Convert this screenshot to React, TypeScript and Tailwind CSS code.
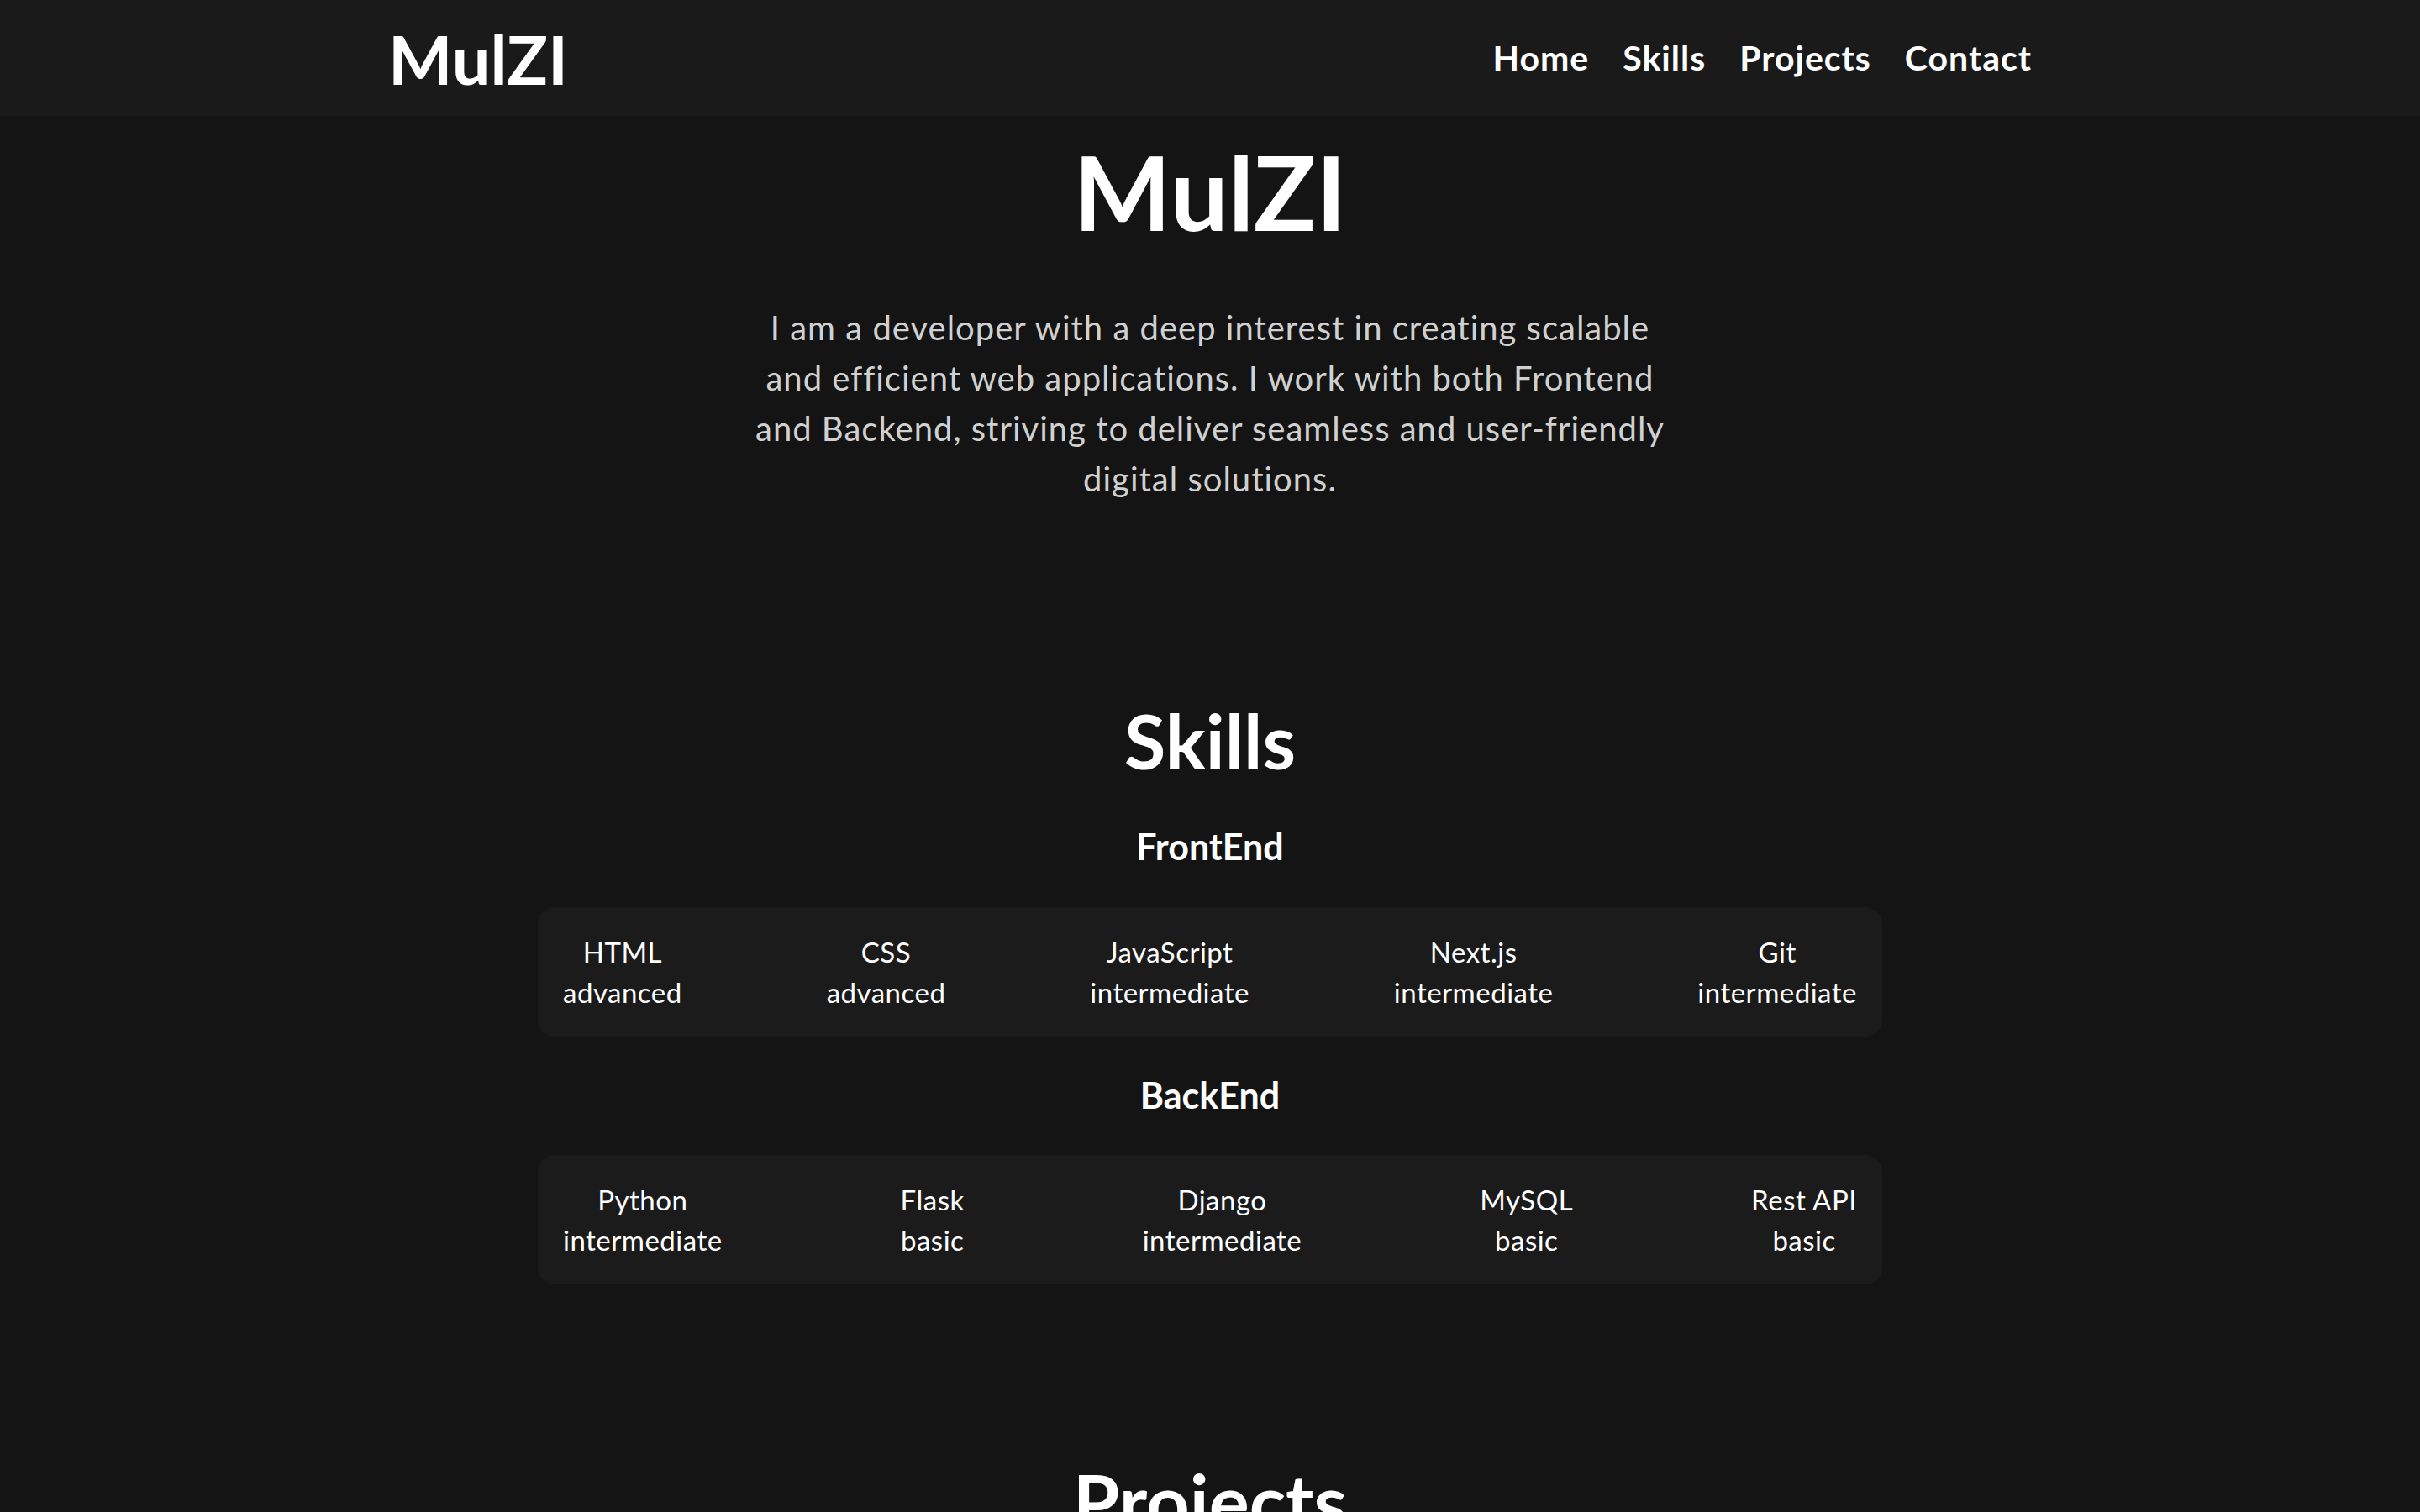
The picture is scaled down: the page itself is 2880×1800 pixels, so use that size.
const frontEnd = [
  { name: 'HTML', level: 'advanced' },
  { name: 'CSS', level: 'advanced' },
  { name: 'JavaScript', level: 'intermediate' },
  { name: 'Next.js', level: 'intermediate' },
  { name: 'Git', level: 'intermediate' },
];

const backEnd = [
  { name: 'Python', level: 'intermediate' },
  { name: 'Flask', level: 'basic' },
  { name: 'Django', level: 'intermediate' },
  { name: 'MySQL', level: 'basic' },
  { name: 'Rest API', level: 'basic' },
];

function SkillRow({ items }: { items: { name: string; level: string }[] }) {
  return (
    <div className="w-[1600px] mx-auto bg-[#1b1b1b] rounded-[20px] px-[30px] py-[29px] flex justify-between">
      {items.map((s) => (
        <div key={s.name} className="text-center text-[33px] tracking-[0.5px] leading-[48px] text-white">
          <div>{s.name}</div>
          <div>{s.level}</div>
        </div>
      ))}
    </div>
  );
}

export default function App() {
  return (
    <div className="min-h-screen bg-[#141414] text-white font-['Lato',sans-serif]">
      {/* Header */}
      <header className="h-[138px] bg-[#1a1a1a]">
        <div className="w-[1956px] h-full mx-auto flex items-center justify-between">
          <div className="text-[81px] leading-none font-bold">MulZI</div>
          <nav className="flex gap-[40px] text-[41px] tracking-[1px] font-bold">
            <a href="#home">Home</a>
            <a href="#skills">Skills</a>
            <a href="#projects">Projects</a>
            <a href="#contact">Contact</a>
          </nav>
        </div>
      </header>

      {/* Hero */}
      <section className="flex flex-col items-center pt-[28px]">
        <h1 className="text-[123px] leading-none font-bold">MulZI</h1>
        <p className="mt-[71px] text-center text-[40px] tracking-[1px] leading-[60px] text-[#d0d0d0]">
          I am a developer with a deep interest in creating scalable
          <br />
          and efficient web applications. I work with both Frontend
          <br />
          and Backend, striving to deliver seamless and user-friendly
          <br />
          digital solutions.
        </p>
      </section>

      {/* Skills */}
      <section id="skills" className="flex flex-col items-center mt-[236px]">
        <h2 className="text-[90px] leading-none font-bold">Skills</h2>
        <h3 className="mt-[60px] text-[43px] leading-none font-bold">FrontEnd</h3>
        <div className="mt-[51px] w-full">
          <SkillRow items={frontEnd} />
        </div>
        <h3 className="mt-[48px] text-[43px] leading-none font-bold">BackEnd</h3>
        <div className="mt-[50px] w-full">
          <SkillRow items={backEnd} />
        </div>
      </section>

      {/* Projects */}
      <section id="projects" className="flex flex-col items-center mt-[212px] pb-[200px]">
        <h2 className="text-[90px] leading-none font-bold">Projects</h2>
      </section>
    </div>
  );
}
